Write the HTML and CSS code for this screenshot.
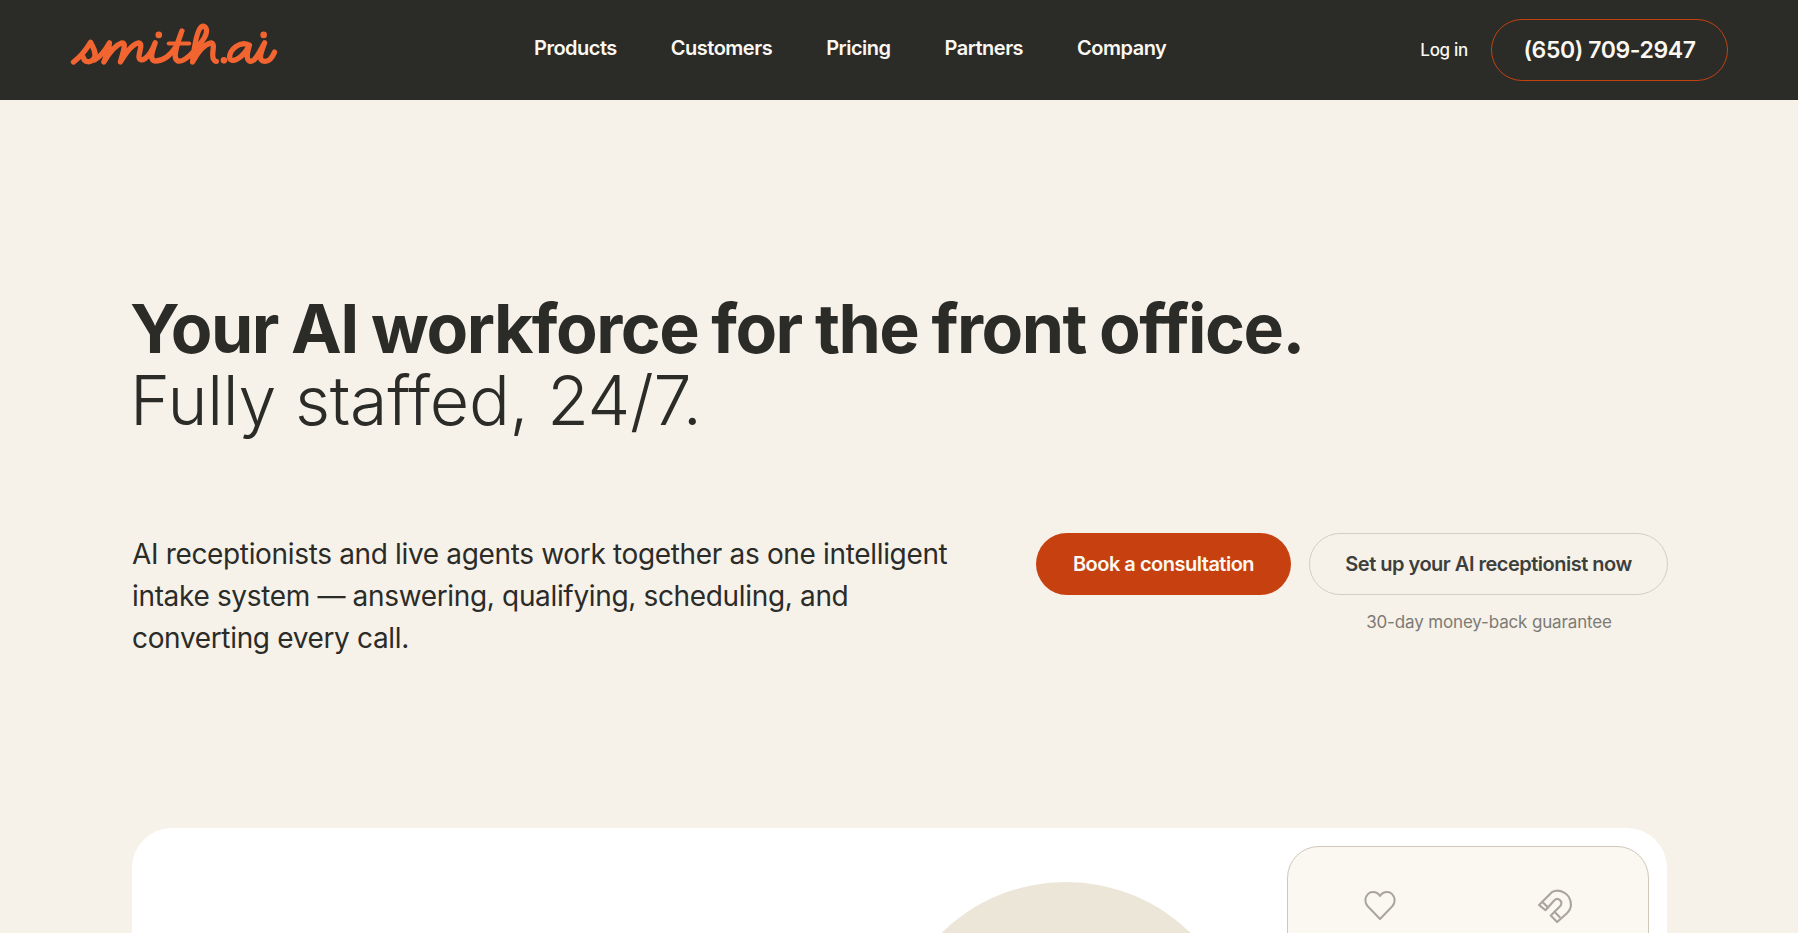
FILE: index.html
```html
<!DOCTYPE html>
<html lang="en">
<head>
  <meta charset="UTF-8">
  <meta name="viewport" content="width=device-width, initial-scale=1.0">
  <title>Smith.ai</title>
  <link rel="stylesheet" href="styles.css">
</head>
<body>

  <!-- Top Navigation -->
  <header class="navbar">
    <a class="logo" href="#" aria-label="smith.ai">
      <svg viewBox="90 65 630 130" width="210" height="43" fill="none" stroke="#f26430" stroke-width="16" stroke-linecap="round" stroke-linejoin="round">
        <path d="M98 186 C120 170 138 146 150 126 C158 145 170 160 160 175 C150 190 130 188 128 172"/>
        <path d="M162 180 C180 170 195 150 207 128 C205 150 196 170 190 186 C205 160 225 135 245 128 C258 128 250 150 240 186 C255 160 275 132 295 128 C310 128 295 160 296 170 C298 190 325 180 345 128 C338 150 325 180 345 183 C375 183 395 160 408 140"/>
        <path d="M426 92 C412 130 396 170 412 182 C432 190 470 150 494 112 C508 88 496 72 484 80 C470 92 462 150 458 186 C472 160 492 132 514 128 C530 130 512 165 522 178 C524 182 527 184 530 184"/>
        <path d="M386 130 L448 130" stroke-width="12"/>
        <path d="M630 135 C600 120 570 150 570 172 C572 190 605 182 630 135 C623 160 618 180 633 184 C648 186 663 150 676 128 C666 155 653 184 678 184 C690 184 700 170 706 156"/>
        <circle cx="356" cy="104" r="10" fill="#f26430" stroke="none"/>
        <circle cx="553" cy="181" r="10" fill="#f26430" stroke="none"/>
        <circle cx="673" cy="104" r="10" fill="#f26430" stroke="none"/>
      </svg>
    </a>
    <nav class="nav-links">
      <a href="#">Products</a>
      <a href="#">Customers</a>
      <a href="#">Pricing</a>
      <a href="#">Partners</a>
      <a href="#">Company</a>
    </nav>
    <div class="nav-right">
      <a class="login" href="#">Log in</a>
      <a class="phone" href="#">(650) 709-2947</a>
    </div>
  </header>

  <main class="content">

    <!-- Hero -->
    <section class="hero">
      <h1 class="hero-title">
        <strong>Your AI workforce for the front office.</strong>
        <span>Fully staffed, 24/7.</span>
      </h1>
      <div class="hero-row">
        <p class="hero-text">AI receptionists and live agents work together as one intelligent intake system — answering, qualifying, scheduling, and converting every call.</p>
        <div class="hero-actions">
          <div class="buttons">
            <a class="button button-primary" href="#">Book a consultation</a>
            <a class="button button-outline" href="#">Set up your AI receptionist now</a>
          </div>
          <div class="guarantee">30-day money-back guarantee</div>
        </div>
      </div>
    </section>

    <!-- Product Card -->
    <section class="card">
      <div class="circle"></div>
      <div class="panel">
        <div class="panel-item">
          <svg viewBox="0 0 32 32" width="34" height="32" fill="none" stroke="#aaa69e" stroke-width="2" stroke-linejoin="round">
            <path d="M16 30 L3.5 17 C-1 11.500 2.500 3 9 3 C12 3 14.500 4.500 16 7 C17.500 4.500 20 3 23 3 C29.500 3 33 11.500 28.500 17 Z"/>
          </svg>
        </div>
        <div class="panel-item">
          <svg viewBox="0 0 32 32" width="34" height="34" fill="none" stroke="#aaa69e" stroke-width="2" stroke-linejoin="round">
            <path d="M1 15 L13 3 C20 -1 31 4 31 15 C31 19 29 21 27 23 L18 31 L12 25 L21 16 C24 12 19 7 15 11 L7 20 Z"/>
            <path d="M4 12 L10 18 M15 21 L21 27"/>
          </svg>
        </div>
      </div>
    </section>

  </main>

</body>
</html>
```

FILE: styles.css
```css
/* Global Styles */
html,
body {
  height: 100%;
  overflow: hidden;
}

body {
  margin: 0;
  background-color: #f6f2ea;
  color: #2b2b28;
  font-family: Inter, "Liberation Sans", sans-serif;
  font-variant-ligatures: none;
}

a {
  color: inherit;
  text-decoration: none;
}

/* Navigation Bar */
.navbar {
  height: 100px;
  box-sizing: border-box;
  padding: 0 70px;
  background-color: #2b2b28;
  color: #fbf8f2;
  display: flex;
  align-items: center;
  position: relative;
}

.logo {
  display: flex;
  width: 464px;
  margin-top: -14px;
}

.nav-links {
  display: flex;
  gap: 54px;
  font-size: 20px;
  font-weight: 600;
  letter-spacing: -0.5px;
  margin-top: -4px;
}

.nav-right {
  margin-left: auto;
  display: flex;
  align-items: center;
  gap: 23px;
}

.login {
  font-size: 17px;
  font-weight: 500;
  letter-spacing: -0.3px;
}

.phone {
  width: 237px;
  height: 62px;
  box-sizing: border-box;
  border: 1px solid #c6410f;
  border-radius: 31px;
  display: flex;
  align-items: center;
  justify-content: center;
  font-size: 23px;
  font-weight: 600;
  letter-spacing: -0.4px;
}

/* Page Content */
.content {
  padding: 0 131px 0 132px;
}

/* Hero */
.hero-title {
  margin: 192px 0 0 -2px;
  font-size: 68px;
  line-height: 72px;
  font-weight: 400;
}

.hero-title strong {
  display: block;
  font-weight: 700;
  letter-spacing: -1.5px;
  word-spacing: -1.5px;
}

.hero-title span {
  display: block;
  font-weight: 300;
  letter-spacing: -0.3px;
}

.hero-row {
  display: flex;
  justify-content: space-between;
  margin-top: 97px;
}

.hero-text {
  margin: 0;
  width: 835px;
  font-size: 28px;
  line-height: 42.200px;
  letter-spacing: -0.34px;
}

.hero-actions {
  width: 632px;
  margin-right: -1px;
}

.buttons {
  display: flex;
  gap: 18px;
}

.button {
  height: 62px;
  box-sizing: border-box;
  border-radius: 31px;
  display: flex;
  align-items: center;
  justify-content: center;
  font-size: 20px;
  font-weight: 600;
  letter-spacing: -0.5px;
}

.button-primary {
  width: 255px;
  background-color: #c6410f;
  color: #fbf8f2;
}

.button-outline {
  width: 359px;
  border: 1px solid #d3cfc0;
  color: #3d3f3c;
}

.guarantee {
  margin-top: 17px;
  padding-left: 274px;
  text-align: center;
  font-size: 17px;
  letter-spacing: -0.15px;
  color: #7c7b74;
}

/* Product Card */
.card {
  margin-top: 168px;
  height: 560px;
  padding: 18px 18px;
  box-sizing: border-box;
  background-color: #fff;
  border-radius: 40px;
  display: flex;
  justify-content: flex-end;
  gap: 43px;
}

.circle {
  width: 356px;
  height: 356px;
  margin-top: 36px;
  border-radius: 50%;
  background-color: #ece6d8;
}

.panel {
  width: 362px;
  height: 480px;
  box-sizing: border-box;
  padding: 42px 6px 40px 4px;
  background-color: #fbf8f2;
  border: 1px solid #cfc8bb;
  border-radius: 32px;
  display: grid;
  grid-template-columns: 1fr 1fr;
  align-content: start;
}

.panel-item {
  display: flex;
  justify-content: center;
}
```
